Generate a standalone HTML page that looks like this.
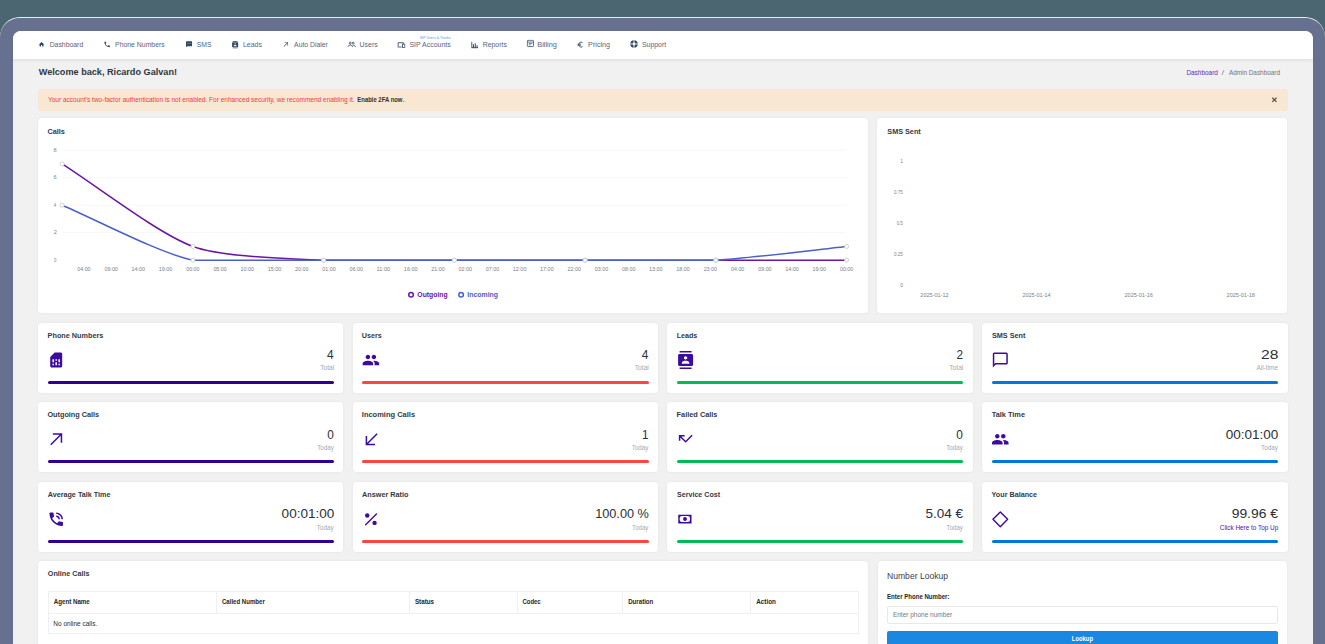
<!DOCTYPE html>
<html><head><meta charset="utf-8">
<style>
*{box-sizing:border-box;margin:0;padding:0}
html,body{width:1325px;height:644px;overflow:hidden;background:#4b6670;font-family:"Liberation Sans", sans-serif}
div{position:absolute}
#frame{left:-0.2px;top:17px;width:1325.6px;height:700px;background:#65718f;border-radius:20px 20px 0 0;border-top:1px solid #e9ecf0}
#content{left:13px;top:30.5px;width:1300px;height:640px;background:#f1f1f1;border-radius:8px 8px 0 0}
#nav{left:13px;top:30.5px;width:1300px;height:28.1px;background:#fff;border-radius:8px 8px 0 0;box-shadow:0 1.5px 3px rgba(0,0,0,0.06)}
.card{background:#fff;border-radius:3.5px;box-shadow:0 0 3px rgba(0,0,0,0.06)}
.bar{height:2.5px;border-radius:1.5px}
svg.ov{position:absolute;left:0;top:0}
svg text{font-family:"Liberation Sans", sans-serif}
</style></head><body>
<div id="frame"></div>
<div id="content"></div>
<div id="nav"></div>
<div style="left:37.5px;top:88.5px;width:1250px;height:22.2px;background:#f8e8d3;border-radius:3px"></div>
<div class="card" style="left:37.9px;top:118.2px;width:830px;height:194.6px"></div>
<div class="card" style="left:876.8px;top:118.2px;width:410.7px;height:194.6px"></div>
<div class="card" style="left:37.9px;top:323.0px;width:305.5px;height:69.5px"></div><div class="bar" style="left:47.5px;top:381.2px;width:286.6px;background:#2e0094"></div><div class="card" style="left:352.6px;top:323.0px;width:305.5px;height:69.5px"></div><div class="bar" style="left:362.20000000000005px;top:381.2px;width:286.5px;background:#ff4444"></div><div class="card" style="left:667.3px;top:323.0px;width:305.5px;height:69.5px"></div><div class="bar" style="left:676.9px;top:381.2px;width:286.3px;background:#00ba55"></div><div class="card" style="left:982.0px;top:323.0px;width:305.5px;height:69.5px"></div><div class="bar" style="left:991.6px;top:381.2px;width:286.5px;background:#0078de"></div><div class="card" style="left:37.9px;top:402.2px;width:305.5px;height:69.5px"></div><div class="bar" style="left:47.5px;top:460.4px;width:286.6px;background:#2e0094"></div><div class="card" style="left:352.6px;top:402.2px;width:305.5px;height:69.5px"></div><div class="bar" style="left:362.20000000000005px;top:460.4px;width:286.5px;background:#ff4444"></div><div class="card" style="left:667.3px;top:402.2px;width:305.5px;height:69.5px"></div><div class="bar" style="left:676.9px;top:460.4px;width:286.3px;background:#00ba55"></div><div class="card" style="left:982.0px;top:402.2px;width:305.5px;height:69.5px"></div><div class="bar" style="left:991.6px;top:460.4px;width:286.5px;background:#0078de"></div><div class="card" style="left:37.9px;top:482.1px;width:305.5px;height:69.5px"></div><div class="bar" style="left:47.5px;top:540.3000000000001px;width:286.6px;background:#2e0094"></div><div class="card" style="left:352.6px;top:482.1px;width:305.5px;height:69.5px"></div><div class="bar" style="left:362.20000000000005px;top:540.3000000000001px;width:286.5px;background:#ff4444"></div><div class="card" style="left:667.3px;top:482.1px;width:305.5px;height:69.5px"></div><div class="bar" style="left:676.9px;top:540.3000000000001px;width:286.3px;background:#00ba55"></div><div class="card" style="left:982.0px;top:482.1px;width:305.5px;height:69.5px"></div><div class="bar" style="left:991.6px;top:540.3000000000001px;width:286.5px;background:#0078de"></div>
<div class="card" style="left:37.9px;top:560.8px;width:830px;height:100px"></div>
<div style="left:47.6px;top:591.3px;width:811px;height:43.2px;border:1px solid #eef0f1"></div>
<div style="left:47.6px;top:612.8px;width:811px;height:1px;background:#eef0f1"></div>
<div style="left:215.5px;top:591.3px;width:1px;height:22px;background:#eef0f1"></div><div style="left:409px;top:591.3px;width:1px;height:22px;background:#eef0f1"></div><div style="left:516.5px;top:591.3px;width:1px;height:22px;background:#eef0f1"></div><div style="left:622.4px;top:591.3px;width:1px;height:22px;background:#eef0f1"></div><div style="left:750.2px;top:591.3px;width:1px;height:22px;background:#eef0f1"></div>
<div class="card" style="left:877.5px;top:561px;width:409.5px;height:100px"></div>
<div style="left:886.8px;top:606px;width:391px;height:17.5px;border:1px solid #e6e8ea;border-radius:2px;background:#fff"></div>
<div style="left:886.8px;top:630.8px;width:391px;height:20px;background:#1a88e0;border-radius:2px"></div>
<svg class="ov" width="1325" height="644" viewBox="0 0 1325 644">
<rect x="62.1" y="232.30" width="784.5" height="0.8" fill="#f5f5f5"/>
<rect x="62.1" y="204.80" width="784.5" height="0.8" fill="#f5f5f5"/>
<rect x="62.1" y="177.30" width="784.5" height="0.8" fill="#f5f5f5"/>
<rect x="62.1" y="149.80" width="784.5" height="0.8" fill="#f5f5f5"/>
<path d="M62.10,163.95 C94.79,184.57 157.52,233.45 192.85,246.45 C222.89,257.51 290.82,258.48 323.60,260.20 C356.20,260.20 421.66,260.20 454.35,260.20 C487.04,260.20 552.41,260.20 585.10,260.20 C617.79,260.20 683.16,260.20 715.85,260.20 C748.54,260.20 813.91,260.20 846.60,260.20" fill="none" stroke="#6a16a0" stroke-width="1.5"/>
<path d="M62.10,205.20 C94.79,218.95 158.83,253.05 192.85,260.20 C224.21,260.20 290.91,260.20 323.60,260.20 C356.29,260.20 421.66,260.20 454.35,260.20 C487.04,260.20 552.41,260.20 585.10,260.20 C617.79,260.20 683.25,260.20 715.85,260.20 C748.63,258.48 813.91,249.89 846.60,246.45" fill="none" stroke="#4b5fc5" stroke-width="1.5"/>
<circle cx="62.10" cy="163.95" r="2.05" fill="#fff" stroke="#c4c4c4" stroke-width="0.75"/>
<circle cx="192.85" cy="246.45" r="2.05" fill="#fff" stroke="#c4c4c4" stroke-width="0.75"/>
<circle cx="323.60" cy="260.20" r="2.05" fill="#fff" stroke="#c4c4c4" stroke-width="0.75"/>
<circle cx="454.35" cy="260.20" r="2.05" fill="#fff" stroke="#c4c4c4" stroke-width="0.75"/>
<circle cx="585.10" cy="260.20" r="2.05" fill="#fff" stroke="#c4c4c4" stroke-width="0.75"/>
<circle cx="715.85" cy="260.20" r="2.05" fill="#fff" stroke="#c4c4c4" stroke-width="0.75"/>
<circle cx="846.60" cy="260.20" r="2.05" fill="#fff" stroke="#c4c4c4" stroke-width="0.75"/>
<circle cx="62.10" cy="205.20" r="2.05" fill="#fff" stroke="#c4c4c4" stroke-width="0.75"/>
<circle cx="192.85" cy="260.20" r="2.05" fill="#fff" stroke="#c4c4c4" stroke-width="0.75"/>
<circle cx="323.60" cy="260.20" r="2.05" fill="#fff" stroke="#c4c4c4" stroke-width="0.75"/>
<circle cx="454.35" cy="260.20" r="2.05" fill="#fff" stroke="#c4c4c4" stroke-width="0.75"/>
<circle cx="585.10" cy="260.20" r="2.05" fill="#fff" stroke="#c4c4c4" stroke-width="0.75"/>
<circle cx="715.85" cy="260.20" r="2.05" fill="#fff" stroke="#c4c4c4" stroke-width="0.75"/>
<circle cx="846.60" cy="246.45" r="2.05" fill="#fff" stroke="#c4c4c4" stroke-width="0.75"/>
<text x="53.93" y="261.70" font-size="6.23" fill="#7a7f87" textLength="2.43" lengthAdjust="spacingAndGlyphs">0</text>
<text x="53.64" y="234.20" font-size="6.23" fill="#7a7f87" textLength="3.12" lengthAdjust="spacingAndGlyphs">2</text>
<text x="53.85" y="206.70" font-size="6.23" fill="#7a7f87" textLength="2.47" lengthAdjust="spacingAndGlyphs">4</text>
<text x="53.61" y="179.20" font-size="6.23" fill="#7a7f87" textLength="3.12" lengthAdjust="spacingAndGlyphs">6</text>
<text x="53.61" y="151.70" font-size="6.23" fill="#7a7f87" textLength="3.12" lengthAdjust="spacingAndGlyphs">8</text>
<text x="77.20" y="271.10" font-size="6.23" fill="#7a7f87" textLength="13.39" lengthAdjust="spacingAndGlyphs">04:00</text>
<text x="104.44" y="271.10" font-size="6.23" fill="#7a7f87" textLength="13.39" lengthAdjust="spacingAndGlyphs">09:00</text>
<text x="131.46" y="271.10" font-size="6.23" fill="#7a7f87" textLength="13.61" lengthAdjust="spacingAndGlyphs">14:00</text>
<text x="158.70" y="271.10" font-size="6.23" fill="#7a7f87" textLength="13.61" lengthAdjust="spacingAndGlyphs">19:00</text>
<text x="186.16" y="271.10" font-size="6.23" fill="#7a7f87" textLength="13.39" lengthAdjust="spacingAndGlyphs">00:00</text>
<text x="213.40" y="271.10" font-size="6.23" fill="#7a7f87" textLength="13.39" lengthAdjust="spacingAndGlyphs">05:00</text>
<text x="240.42" y="271.10" font-size="6.23" fill="#7a7f87" textLength="13.61" lengthAdjust="spacingAndGlyphs">10:00</text>
<text x="267.66" y="271.10" font-size="6.23" fill="#7a7f87" textLength="13.61" lengthAdjust="spacingAndGlyphs">15:00</text>
<text x="295.04" y="271.10" font-size="6.23" fill="#7a7f87" textLength="13.47" lengthAdjust="spacingAndGlyphs">20:00</text>
<text x="322.36" y="271.10" font-size="6.23" fill="#7a7f87" textLength="13.39" lengthAdjust="spacingAndGlyphs">01:00</text>
<text x="349.60" y="271.10" font-size="6.23" fill="#7a7f87" textLength="13.39" lengthAdjust="spacingAndGlyphs">06:00</text>
<text x="376.61" y="271.10" font-size="6.23" fill="#7a7f87" textLength="13.64" lengthAdjust="spacingAndGlyphs">11:00</text>
<text x="403.86" y="271.10" font-size="6.23" fill="#7a7f87" textLength="13.61" lengthAdjust="spacingAndGlyphs">16:00</text>
<text x="431.24" y="271.10" font-size="6.23" fill="#7a7f87" textLength="13.47" lengthAdjust="spacingAndGlyphs">21:00</text>
<text x="458.56" y="271.10" font-size="6.23" fill="#7a7f87" textLength="13.39" lengthAdjust="spacingAndGlyphs">02:00</text>
<text x="485.80" y="271.10" font-size="6.23" fill="#7a7f87" textLength="13.39" lengthAdjust="spacingAndGlyphs">07:00</text>
<text x="512.82" y="271.10" font-size="6.23" fill="#7a7f87" textLength="13.61" lengthAdjust="spacingAndGlyphs">12:00</text>
<text x="540.06" y="271.10" font-size="6.23" fill="#7a7f87" textLength="13.61" lengthAdjust="spacingAndGlyphs">17:00</text>
<text x="567.44" y="271.10" font-size="6.23" fill="#7a7f87" textLength="13.47" lengthAdjust="spacingAndGlyphs">22:00</text>
<text x="594.76" y="271.10" font-size="6.23" fill="#7a7f87" textLength="13.39" lengthAdjust="spacingAndGlyphs">03:00</text>
<text x="622.00" y="271.10" font-size="6.23" fill="#7a7f87" textLength="13.39" lengthAdjust="spacingAndGlyphs">08:00</text>
<text x="649.01" y="271.10" font-size="6.23" fill="#7a7f87" textLength="13.61" lengthAdjust="spacingAndGlyphs">13:00</text>
<text x="676.25" y="271.10" font-size="6.23" fill="#7a7f87" textLength="13.61" lengthAdjust="spacingAndGlyphs">18:00</text>
<text x="703.63" y="271.10" font-size="6.23" fill="#7a7f87" textLength="13.47" lengthAdjust="spacingAndGlyphs">23:00</text>
<text x="730.95" y="271.10" font-size="6.23" fill="#7a7f87" textLength="13.39" lengthAdjust="spacingAndGlyphs">04:00</text>
<text x="758.19" y="271.10" font-size="6.23" fill="#7a7f87" textLength="13.39" lengthAdjust="spacingAndGlyphs">09:00</text>
<text x="785.21" y="271.10" font-size="6.23" fill="#7a7f87" textLength="13.61" lengthAdjust="spacingAndGlyphs">14:00</text>
<text x="812.45" y="271.10" font-size="6.23" fill="#7a7f87" textLength="13.61" lengthAdjust="spacingAndGlyphs">19:00</text>
<text x="839.91" y="271.10" font-size="6.23" fill="#7a7f87" textLength="13.39" lengthAdjust="spacingAndGlyphs">00:00</text>
<circle cx="411.05" cy="294.7" r="2.3" fill="none" stroke="#6a16a0" stroke-width="1.5"/>
<text x="417.33" y="297.40" font-size="6.67" fill="#6a16a0" font-weight="bold" textLength="30.34" lengthAdjust="spacingAndGlyphs">Outgoing</text>
<circle cx="461.1" cy="294.7" r="2.3" fill="none" stroke="#4b5fc5" stroke-width="1.5"/>
<text x="467.25" y="297.40" font-size="6.67" fill="#4b5fc5" font-weight="bold" textLength="30.80" lengthAdjust="spacingAndGlyphs">Incoming</text>
<text x="900.35" y="162.60" font-size="5.65" fill="#7a7f87" textLength="2.67" lengthAdjust="spacingAndGlyphs">1</text>
<text x="893.96" y="193.80" font-size="5.65" fill="#7a7f87" textLength="8.73" lengthAdjust="spacingAndGlyphs">0.75</text>
<text x="896.63" y="225.00" font-size="5.65" fill="#7a7f87" textLength="6.04" lengthAdjust="spacingAndGlyphs">0.5</text>
<text x="893.96" y="256.20" font-size="5.65" fill="#7a7f87" textLength="8.73" lengthAdjust="spacingAndGlyphs">0.25</text>
<text x="900.30" y="287.40" font-size="5.65" fill="#7a7f87" textLength="2.67" lengthAdjust="spacingAndGlyphs">0</text>
<text x="920.32" y="296.70" font-size="6.23" fill="#7a7f87" textLength="28.33" lengthAdjust="spacingAndGlyphs">2025-01-12</text>
<text x="1022.42" y="296.70" font-size="6.23" fill="#7a7f87" textLength="28.22" lengthAdjust="spacingAndGlyphs">2025-01-14</text>
<text x="1124.52" y="296.70" font-size="6.23" fill="#7a7f87" textLength="28.30" lengthAdjust="spacingAndGlyphs">2025-01-16</text>
<text x="1226.62" y="296.70" font-size="6.23" fill="#7a7f87" textLength="28.30" lengthAdjust="spacingAndGlyphs">2025-01-18</text>
<text x="47.63" y="337.60" font-size="7.25" fill="#333a44" font-weight="bold" textLength="55.65" lengthAdjust="spacingAndGlyphs">Phone Numbers</text>
<svg x="47.20" y="351.10" width="18" height="18" viewBox="0 0 24 24"><path fill="#3c0ba0" d="M19.99 4c0-1.1-.89-2-1.99-2h-8L4 8v12c0 1.1.9 2 2 2h12.01c1.1 0 1.99-.9 1.99-2l-.01-16zM9 19H7v-2h2v2zm8 0h-2v-2h2v2zm-8-4H7v-4h2v4zm4 4h-2v-4h2v4zm0-6h-2v-2h2v2zm4 2h-2v-4h2v4z"/></svg>
<text x="327.09" y="359.30" font-size="12.46" fill="#2b3036" textLength="6.62" lengthAdjust="spacingAndGlyphs">4</text>
<text x="320.17" y="370.40" font-size="6.81" fill="#a5a9b0" textLength="14.05" lengthAdjust="spacingAndGlyphs">Total</text>
<text x="361.87" y="337.60" font-size="7.25" fill="#333a44" font-weight="bold" textLength="19.88" lengthAdjust="spacingAndGlyphs">Users</text>
<svg x="361.90" y="351.10" width="18" height="18" viewBox="0 0 24 24"><path fill="#3c0ba0" d="M16 11c1.66 0 2.99-1.34 2.99-3S17.66 5 16 5c-1.66 0-3 1.34-3 3s1.34 3 3 3zm-8 0c1.66 0 2.99-1.34 2.99-3S9.66 5 8 5C6.34 5 5 6.34 5 8s1.34 3 3 3zm0 2c-2.33 0-7 1.17-7 3.5V19h14v-2.5c0-2.33-4.67-3.5-7-3.5zm8 0c-.29 0-.62.02-.97.05 1.16.84 1.97 1.97 1.97 3.45V19h6v-2.5c0-2.33-4.67-3.5-7-3.5z"/></svg>
<text x="641.69" y="359.30" font-size="12.46" fill="#2b3036" textLength="6.62" lengthAdjust="spacingAndGlyphs">4</text>
<text x="634.77" y="370.40" font-size="6.81" fill="#a5a9b0" textLength="14.05" lengthAdjust="spacingAndGlyphs">Total</text>
<text x="676.64" y="337.60" font-size="7.25" fill="#333a44" font-weight="bold" textLength="20.61" lengthAdjust="spacingAndGlyphs">Leads</text>
<svg x="676.60" y="351.10" width="18" height="18" viewBox="0 0 24 24"><path fill="#3c0ba0" d="M20 0H4v2h16V0zM4 24h16v-2H4v2zM20 4H4c-1.1 0-2 .9-2 2v12c0 1.1.9 2 2 2h16c1.1 0 2-.9 2-2V6c0-1.1-.9-2-2-2zm-8 2.75c1.24 0 2.25 1.01 2.25 2.25s-1.01 2.25-2.25 2.25S9.75 10.24 9.75 9 10.76 6.75 12 6.75zM17 17H7v-1.5c0-1.67 3.33-2.5 5-2.5s5 .83 5 2.5V17z"/></svg>
<text x="956.49" y="359.30" font-size="12.46" fill="#2b3036" textLength="6.55" lengthAdjust="spacingAndGlyphs">2</text>
<text x="949.27" y="370.40" font-size="6.81" fill="#a5a9b0" textLength="14.05" lengthAdjust="spacingAndGlyphs">Total</text>
<text x="991.92" y="337.60" font-size="7.25" fill="#333a44" font-weight="bold" textLength="33.43" lengthAdjust="spacingAndGlyphs">SMS Sent</text>
<svg x="991.30" y="351.10" width="18" height="18" viewBox="0 0 24 24"><g transform="scale(0.025)"><path fill="#3c0ba0" transform="translate(0,960)" d="M80-80v-720q0-33 23.5-56.5T160-880h640q33 0 56.5 23.5T880-800v480q0 33-23.5 56.5T800-240H240L80-80Zm126-240h594v-480H160v525l46-45Z"/></g></svg>
<text x="1261.12" y="359.30" font-size="12.46" fill="#2b3036" textLength="17.34" lengthAdjust="spacingAndGlyphs">28</text>
<text x="1256.50" y="370.40" font-size="6.81" fill="#a5a9b0" textLength="21.55" lengthAdjust="spacingAndGlyphs">All-time</text>
<text x="47.41" y="416.80" font-size="7.25" fill="#333a44" font-weight="bold" textLength="51.75" lengthAdjust="spacingAndGlyphs">Outgoing Calls</text>
<svg x="47.20" y="430.30" width="18" height="18" viewBox="0 0 24 24"><path fill="#3c0ba0" d="M5.4 20L4 18.6 16.6 6H7.5V4h12.5v12.5h-2V7.4z"/></svg>
<text x="327.24" y="438.50" font-size="12.46" fill="#2b3036" textLength="6.59" lengthAdjust="spacingAndGlyphs">0</text>
<text x="317.18" y="449.60" font-size="6.81" fill="#a5a9b0" textLength="16.62" lengthAdjust="spacingAndGlyphs">Today</text>
<text x="361.81" y="416.80" font-size="7.25" fill="#333a44" font-weight="bold" textLength="53.27" lengthAdjust="spacingAndGlyphs">Incoming Calls</text>
<svg x="361.90" y="430.30" width="18" height="18" viewBox="0 0 24 24"><path fill="#3c0ba0" d="M5 20V7.5h2v9.1L19.6 4 21 5.4 8.4 18H17.5v2z"/></svg>
<text x="642.03" y="438.50" font-size="12.46" fill="#2b3036" textLength="6.51" lengthAdjust="spacingAndGlyphs">1</text>
<text x="631.78" y="449.60" font-size="6.81" fill="#a5a9b0" textLength="16.62" lengthAdjust="spacingAndGlyphs">Today</text>
<text x="676.62" y="416.80" font-size="7.25" fill="#333a44" font-weight="bold" textLength="40.85" lengthAdjust="spacingAndGlyphs">Failed Calls</text>
<svg x="676.60" y="430.30" width="18" height="18" viewBox="0 0 24 24"><path fill="#3c0ba0" d="M12 16.6L5 9.6V14H3V6.4h7.7v2H6.4L12 14l8-8 1.4 1.4z"/></svg>
<text x="956.34" y="438.50" font-size="12.46" fill="#2b3036" textLength="6.59" lengthAdjust="spacingAndGlyphs">0</text>
<text x="946.17" y="449.60" font-size="6.81" fill="#a5a9b0" textLength="16.72" lengthAdjust="spacingAndGlyphs">Today</text>
<text x="991.73" y="416.80" font-size="7.25" fill="#333a44" font-weight="bold" textLength="33.30" lengthAdjust="spacingAndGlyphs">Talk Time</text>
<svg x="991.30" y="430.30" width="18" height="18" viewBox="0 0 24 24"><path fill="#3c0ba0" d="M16 11c1.66 0 2.99-1.34 2.99-3S17.66 5 16 5c-1.66 0-3 1.34-3 3s1.34 3 3 3zm-8 0c1.66 0 2.99-1.34 2.99-3S9.66 5 8 5C6.34 5 5 6.34 5 8s1.34 3 3 3zm0 2c-2.33 0-7 1.17-7 3.5V19h14v-2.5c0-2.33-4.67-3.5-7-3.5zm8 0c-.29 0-.62.02-.97.05 1.16.84 1.97 1.97 1.97 3.45V19h6v-2.5c0-2.33-4.67-3.5-7-3.5z"/></svg>
<text x="1225.73" y="438.50" font-size="12.46" fill="#2b3036" textLength="52.58" lengthAdjust="spacingAndGlyphs">00:01:00</text>
<text x="1261.07" y="449.60" font-size="6.81" fill="#a5a9b0" textLength="16.72" lengthAdjust="spacingAndGlyphs">Today</text>
<text x="47.72" y="496.70" font-size="7.25" fill="#333a44" font-weight="bold" textLength="62.72" lengthAdjust="spacingAndGlyphs">Average Talk Time</text>
<svg x="47.20" y="510.20" width="18" height="18" viewBox="0 0 24 24"><path fill="#3c0ba0" d="M20 15.5c-1.25 0-2.45-.2-3.57-.57-.35-.11-.74-.03-1.02.24l-2.2 2.2c-2.83-1.44-5.15-3.75-6.59-6.59l2.2-2.21c.28-.26.36-.65.25-1C8.7 6.45 8.5 5.25 8.5 4c0-.55-.45-1-1-1H4c-.55 0-1 .45-1 1 0 9.39 7.61 17 17 17 .55 0 1-.45 1-1v-3.5c0-.55-.45-1-1-1zM19 12h2c0-4.97-4.03-9-9-9v2c3.87 0 7 3.13 7 7zm-4 0h2c0-2.76-2.24-5-5-5v2c1.66 0 3 1.34 3 3z"/></svg>
<text x="281.63" y="518.40" font-size="12.46" fill="#2b3036" textLength="52.68" lengthAdjust="spacingAndGlyphs">00:01:00</text>
<text x="316.87" y="529.50" font-size="6.81" fill="#a5a9b0" textLength="16.92" lengthAdjust="spacingAndGlyphs">Today</text>
<text x="362.02" y="496.70" font-size="7.25" fill="#333a44" font-weight="bold" textLength="46.44" lengthAdjust="spacingAndGlyphs">Answer Ratio</text>
<svg x="361.90" y="510.20" width="18" height="18" viewBox="0 0 24 24"><circle cx="7.1" cy="7.1" r="2.9" fill="#3c0ba0"/><circle cx="16.9" cy="16.9" r="2.9" fill="#3c0ba0"/><path d="M5 19.4L19.4 5" stroke="#3c0ba0" stroke-width="1.8" stroke-linecap="round"/></svg>
<text x="595.15" y="518.40" font-size="12.46" fill="#2b3036" textLength="53.71" lengthAdjust="spacingAndGlyphs">100.00 %</text>
<text x="632.08" y="529.50" font-size="6.81" fill="#a5a9b0" textLength="16.31" lengthAdjust="spacingAndGlyphs">Today</text>
<text x="677.02" y="496.70" font-size="7.25" fill="#333a44" font-weight="bold" textLength="43.04" lengthAdjust="spacingAndGlyphs">Service Cost</text>
<svg x="676.60" y="510.20" width="18" height="18" viewBox="0 0 24 24"><path fill="#3c0ba0" fill-rule="evenodd" d="M2.2 5.9h17.7v11.7H2.2zM4.1 10.5q0-2.8 3-2.8h7.8q3 0 3 2.8v2.4q0 2.8-3 2.8H7.1q-3 0-3-2.8z"/><circle cx="11.2" cy="11.7" r="2.6" fill="#3c0ba0"/></svg>
<text x="925.46" y="518.40" font-size="12.46" fill="#2b3036" textLength="37.58" lengthAdjust="spacingAndGlyphs">5.04 €</text>
<text x="946.58" y="529.50" font-size="6.81" fill="#a5a9b0" textLength="16.31" lengthAdjust="spacingAndGlyphs">Today</text>
<text x="991.59" y="496.70" font-size="7.25" fill="#333a44" font-weight="bold" textLength="45.54" lengthAdjust="spacingAndGlyphs">Your Balance</text>
<svg x="991.30" y="510.20" width="18" height="18" viewBox="0 0 24 24"><path fill="none" stroke="#3c0ba0" stroke-width="1.9" stroke-linejoin="round" d="M12 2.4L21.8 12.2 12 22 2.2 12.2z"/></svg>
<text x="1231.68" y="518.40" font-size="12.46" fill="#2b3036" textLength="46.28" lengthAdjust="spacingAndGlyphs">99.96 €</text>
<text x="1219.78" y="529.50" font-size="6.81" fill="#4520a8" textLength="58.49" lengthAdjust="spacingAndGlyphs">Click Here to Top Up</text>
<svg x="38.25" y="41.10" width="6.60" height="6.60" viewBox="0 0 24 24"><path fill="#2f4763" d="M10 20v-6h4v6h5v-8h3L12 3 2 12h3v8z"/></svg>
<text x="49.65" y="47.00" font-size="7.97" fill="#56657d" textLength="33.58" lengthAdjust="spacingAndGlyphs">Dashboard</text>
<svg x="103.49" y="40.74" width="7.32" height="7.32" viewBox="0 0 24 24"><path fill="#2f4763" d="M20 15.5c-1.25 0-2.45-.2-3.57-.57-.35-.11-.74-.03-1.02.24l-2.2 2.2c-2.83-1.44-5.15-3.75-6.59-6.59l2.2-2.21c.28-.26.36-.65.25-1C8.7 6.45 8.5 5.25 8.5 4c0-.55-.45-1-1-1H4c-.55 0-1 .45-1 1 0 9.39 7.61 17 17 17 .55 0 1-.45 1-1v-3.5c0-.55-.45-1-1-1z"/></svg>
<text x="115.05" y="47.00" font-size="7.97" fill="#56657d" textLength="49.70" lengthAdjust="spacingAndGlyphs">Phone Numbers</text>
<svg x="185.39" y="40.64" width="7.32" height="7.32" viewBox="0 0 24 24"><path fill="#2f4763" d="M20 2H4c-1.1 0-1.99.9-1.99 2L2 22l4-4h14c1.1 0 2-.9 2-2V4c0-1.1-.9-2-2-2zM9 11H7V9h2v2zm4 0h-2V9h2v2zm4 0h-2V9h2v2z"/></svg>
<text x="196.79" y="47.00" font-size="7.97" fill="#56657d" textLength="14.79" lengthAdjust="spacingAndGlyphs">SMS</text>
<svg x="231.49" y="41.09" width="7.32" height="7.32" viewBox="0 0 24 24"><path fill="#2f4763" d="M20 0H4v2h16V0zM4 24h16v-2H4v2zM20 4H4c-1.1 0-2 .9-2 2v12c0 1.1.9 2 2 2h16c1.1 0 2-.9 2-2V6c0-1.1-.9-2-2-2zm-8 2.75c1.24 0 2.25 1.01 2.25 2.25s-1.01 2.25-2.25 2.25S9.75 10.24 9.75 9 10.76 6.75 12 6.75zM17 17H7v-1.5c0-1.67 3.33-2.5 5-2.5s5 .83 5 2.5V17z"/></svg>
<text x="242.94" y="47.00" font-size="7.97" fill="#56657d" textLength="19.00" lengthAdjust="spacingAndGlyphs">Leads</text>
<svg x="282.55" y="41.20" width="6.60" height="6.60" viewBox="0 0 24 24"><path fill="#2f4763" d="M5.4 20L4 18.6 16.6 6H7.5V4h12.5v12.5h-2V7.4z"/></svg>
<text x="294.10" y="47.00" font-size="7.97" fill="#56657d" textLength="33.68" lengthAdjust="spacingAndGlyphs">Auto Dialer</text>
<svg x="347.26" y="40.01" width="8.88" height="8.88" viewBox="0 0 24 24"><path fill="none" stroke="#2f4763" stroke-width="2.2" d="M8 11a2.6 2.6 0 1 0 0-5.2 2.6 2.6 0 0 0 0 5.2zM16 11a2.6 2.6 0 1 0 0-5.2 2.6 2.6 0 0 0 0 5.2zM2 19v-1.5c0-2 3-3.5 6-3.5s6 1.5 6 3.5V19M14.5 14.2c3.5 0 7.5 1.3 7.5 3.3V19"/></svg>
<text x="359.58" y="47.00" font-size="7.97" fill="#56657d" textLength="18.07" lengthAdjust="spacingAndGlyphs">Users</text>
<svg x="397.09" y="40.24" width="8.52" height="8.52" viewBox="0 0 24 24"><path fill="none" stroke="#2f4763" stroke-width="2.4" d="M3 17V7h15v3M1 19h12"/><rect x="15" y="11" width="7" height="9" fill="none" stroke="#2f4763" stroke-width="2.2"/></svg>
<text x="409.39" y="47.00" font-size="7.97" fill="#56657d" textLength="41.36" lengthAdjust="spacingAndGlyphs">SIP Accounts</text>
<svg x="470.73" y="40.83" width="8.04" height="8.04" viewBox="0 0 24 24"><path fill="#2f4763" d="M2 3h2.5v16H2zM6.5 10h3v9h-3zM12 7h3v12h-3zM17.5 13h3v6h-3zM2 19.5h20V22H2z"/></svg>
<text x="482.64" y="47.00" font-size="7.97" fill="#56657d" textLength="24.31" lengthAdjust="spacingAndGlyphs">Reports</text>
<svg x="526.31" y="39.31" width="8.28" height="8.28" viewBox="0 0 24 24"><rect x="3" y="3" width="18" height="18" rx="2" fill="none" stroke="#2f4763" stroke-width="2.2"/><path stroke="#2f4763" stroke-width="2" d="M3 8h18M7 12h10M7 16h6"/></svg>
<text x="537.31" y="47.00" font-size="7.97" fill="#56657d" textLength="19.65" lengthAdjust="spacingAndGlyphs">Billing</text>
<svg x="576.73" y="40.88" width="7.44" height="7.44" viewBox="0 0 24 24"><path fill="none" stroke="#2f4763" stroke-width="2.8" d="M19 5.5A8 8 0 1 0 19 18.5M3 10.5h11M3 14h10"/></svg>
<text x="588.12" y="47.00" font-size="7.97" fill="#56657d" textLength="22.02" lengthAdjust="spacingAndGlyphs">Pricing</text>
<svg x="629.32" y="39.22" width="9.36" height="9.36" viewBox="0 0 24 24"><circle cx="12" cy="12" r="9.5" fill="#2f4763"/><circle cx="12" cy="12" r="4" fill="#fff"/><path stroke="#c8d0da" stroke-width="3" d="M12 2v6M12 16v6M2 12h6M16 12h6"/></svg>
<text x="641.99" y="47.00" font-size="7.97" fill="#56657d" textLength="24.13" lengthAdjust="spacingAndGlyphs">Support</text>
<text x="420.04" y="38.70" font-size="3.91" fill="#3d9be9" textLength="30.49" lengthAdjust="spacingAndGlyphs">SIP Users &amp; Trunks</text>
<text x="38.70" y="75.40" font-size="9.28" fill="#2f3640" font-weight="bold" textLength="138.36" lengthAdjust="spacingAndGlyphs">Welcome back, Ricardo Galvan!</text>
<text x="1186.38" y="74.80" font-size="6.96" fill="#5533b8" textLength="31.52" lengthAdjust="spacingAndGlyphs">Dashboard</text>
<text x="1221.60" y="74.80" font-size="6.96" fill="#8a9097" textLength="2.68" lengthAdjust="spacingAndGlyphs">/</text>
<text x="1228.90" y="74.80" font-size="6.96" fill="#6f767e" textLength="51.08" lengthAdjust="spacingAndGlyphs">Admin Dashboard</text>
<text x="47.97" y="101.80" font-size="6.67" fill="#f0384a" textLength="306.60" lengthAdjust="spacingAndGlyphs">Your account's two-factor authentication is not enabled. For enhanced security, we recommend enabling it.</text>
<text x="357.32" y="101.80" font-size="6.67" fill="#33302c" font-weight="bold" textLength="45.16" lengthAdjust="spacingAndGlyphs">Enable 2FA now</text>
<text x="402.03" y="101.80" font-size="6.67" fill="#f0384a" textLength="3.61" lengthAdjust="spacingAndGlyphs">.</text>
<path d="M1272.3 97.7L1276.5 101.9M1276.5 97.7L1272.3 101.9" stroke="#5e4e3e" stroke-width="1.25"/>
<text x="47.41" y="133.60" font-size="7.83" fill="#333a44" font-weight="bold" textLength="17.45" lengthAdjust="spacingAndGlyphs">Calls</text>
<text x="887.32" y="133.60" font-size="7.83" fill="#333a44" font-weight="bold" textLength="33.43" lengthAdjust="spacingAndGlyphs">SMS Sent</text>
<text x="47.81" y="575.90" font-size="7.25" fill="#333a44" font-weight="bold" textLength="41.74" lengthAdjust="spacingAndGlyphs">Online Calls</text>
<text x="53.75" y="604.40" font-size="6.52" fill="#22262a" font-weight="bold" textLength="36.04" lengthAdjust="spacingAndGlyphs">Agent Name</text>
<text x="221.96" y="604.40" font-size="6.52" fill="#22262a" font-weight="bold" textLength="42.82" lengthAdjust="spacingAndGlyphs">Called Number</text>
<text x="414.94" y="604.40" font-size="6.52" fill="#22262a" font-weight="bold" textLength="19.18" lengthAdjust="spacingAndGlyphs">Status</text>
<text x="522.46" y="604.40" font-size="6.52" fill="#22262a" font-weight="bold" textLength="18.19" lengthAdjust="spacingAndGlyphs">Codec</text>
<text x="628.20" y="604.40" font-size="6.52" fill="#22262a" font-weight="bold" textLength="25.17" lengthAdjust="spacingAndGlyphs">Duration</text>
<text x="756.24" y="604.40" font-size="6.52" fill="#22262a" font-weight="bold" textLength="19.75" lengthAdjust="spacingAndGlyphs">Action</text>
<text x="53.38" y="626.00" font-size="6.38" fill="#2a2e33" textLength="43.88" lengthAdjust="spacingAndGlyphs">No online calls.</text>
<text x="887.01" y="578.70" font-size="8.41" fill="#3a4250" textLength="61.03" lengthAdjust="spacingAndGlyphs">Number Lookup</text>
<text x="887.00" y="598.90" font-size="7.10" fill="#22262a" font-weight="bold" textLength="62.47" lengthAdjust="spacingAndGlyphs">Enter Phone Number:</text>
<text x="892.88" y="616.80" font-size="6.96" fill="#737b83" textLength="59.30" lengthAdjust="spacingAndGlyphs">Enter phone number</text>
<text x="1071.82" y="640.70" font-size="7.25" fill="#ffffff" font-weight="bold" textLength="21.22" lengthAdjust="spacingAndGlyphs">Lookup</text>
</svg>
</body></html>
